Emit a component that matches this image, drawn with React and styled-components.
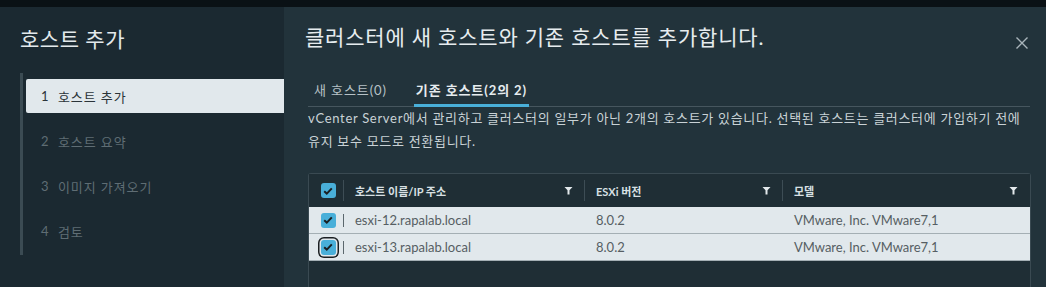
import React from "react";
import styled, { createGlobalStyle } from "styled-components";

const Global = createGlobalStyle`
  html, body { margin: 0; padding: 0; background: #0a1115; }
  body { font-family: Lato, "Noto Sans CJK KR", sans-serif; overflow: hidden; }
  * { box-sizing: border-box; }
`;

const Page = styled.div`
  width: 1046px;
  height: 287px;
  display: flex;
  flex-direction: column;
`;

const TopStrip = styled.div`
  height: 7px;
  background: #0a1115;
  flex: none;
`;

const Modal = styled.div`
  flex: 1;
  display: flex;
  min-height: 0;
`;

const Sidebar = styled.aside`
  width: 284px;
  flex: none;
  background: #1b2931;
  padding: 18px 0 0 0;
  display: flex;
  flex-direction: column;
`;

const SideTitle = styled.h2`
  margin: 0 0 20px 20px;
  font-size: 21px;
  line-height: 28px;
  font-weight: 400;
  letter-spacing: 0.5px;
  color: #e3e9ec;
`;

const StepList = styled.ol`
  list-style: none;
  margin: 0 0 0 20px;
  padding: 6px 0 7px 6px;
  border-left: 3px solid #3b4b53;
  display: flex;
  flex-direction: column;
  gap: 11px;
`;

const Step = styled.li`
  height: 34px;
  display: flex;
  align-items: center;
  padding-left: 15px;
  margin-left: -3px;
  font-size: 13px;
  letter-spacing: 0.9px;
  color: ${(p) => (p.$active ? "#2b3439" : "#5f6d74")};
  background: ${(p) => (p.$active ? "#e1e8ec" : "transparent")};
  border-radius: 2px 0 0 2px;
`;

const StepNum = styled.span`
  width: 17px;
  flex: none;
`;

const Main = styled.section`
  flex: 1;
  background: #22333b;
  padding: 16px 16px 0 24px;
  display: flex;
  flex-direction: column;
  min-width: 0;
`;

const Header = styled.div`
  display: flex;
  align-items: center;
  justify-content: space-between;
`;

const Title = styled.h1`
  margin: 0 0 0 -3px;
  font-size: 21px;
  line-height: 28px;
  font-weight: 400;
  color: #e6ecef;
  letter-spacing: 0.8px;
`;

const Close = styled.button`
  border: 0;
  background: none;
  padding: 0;
  width: 16px;
  height: 16px;
  margin: 12px 0 0 0;
  display: flex;
  align-items: center;
  justify-content: center;
  color: #a9b5ba;
`;

const Tabs = styled.div`
  display: flex;
  gap: 25px;
  margin-top: 20px;
  border-bottom: 1px solid #46565e;
  padding-left: 4px;
`;

const Tab = styled.div`
  height: 36px;
  display: flex;
  align-items: center;
  padding: 3px 2px 0 2px;
  font-size: 13px;
  letter-spacing: 0.9px;
  font-weight: ${(p) => (p.$active ? 700 : 400)};
  color: ${(p) => (p.$active ? "#e6ecef" : "#b7c2c7")};
  border-bottom: 3px solid ${(p) => (p.$active ? "#49afd9" : "transparent")};
  margin-bottom: -1px;
`;

const Desc = styled.p`
  margin: 0;
  font-size: 13px;
  line-height: 23px;
  letter-spacing: 0.7px;
  color: #c9d2d6;
  width: 722px;
`;

const Table = styled.div`
  margin-top: 20px;
  width: 723px;
  flex: 1;
  border: 1px solid #3a4a52;
  border-bottom: 0;
  border-radius: 3px 3px 0 0;
  background: #1f2e35;
  display: flex;
  flex-direction: column;
`;

const Row = styled.div`
  display: grid;
  grid-template-columns: 35px 241px 198px 1fr;
  align-items: center;
  height: ${(p) => (p.$head ? "33px" : "27px")};
  background: ${(p) => (p.$head ? "#1f2e35" : "#e1e8ec")};
  border-bottom: ${(p) => (p.$head ? "none" : "1px solid #a4afb4")};
`;

const CheckCell = styled.div`
  height: 100%;
  display: flex;
  align-items: center;
  justify-content: center;
  position: relative;
  padding-left: 3px;
  &::after {
    content: "";
    position: absolute;
    right: 0;
    top: ${(p) => (p.$head ? "6px" : "7px")};
    bottom: 6px;
    width: 1px;
    background: ${(p) => (p.$head ? "#3d4d55" : "#5b676d")};
  }
`;

const Box = styled.span`
  width: 15px;
  height: 15px;
  border-radius: 3px;
  background: #49afd9;
  display: flex;
  align-items: center;
  justify-content: center;
  box-shadow: ${(p) => (p.$focus ? "0 0 0 1.5px #e1e8ec, 0 0 0 3px #1b1f22" : "none")};
`;

const HeadCell = styled.div`
  height: 100%;
  display: flex;
  align-items: center;
  justify-content: space-between;
  padding: 0 12px 0 11px;
  font-size: 11px;
  font-weight: 700;
  color: #d8e0e4;
  position: relative;
  &::after {
    content: "";
    display: ${(p) => (p.$last ? "none" : "block")};
    position: absolute;
    right: 0;
    top: 6px;
    bottom: 6px;
    width: 1px;
    background: #3d4d55;
  }
`;

const Cell = styled.div`
  padding-left: 11px;
  font-size: 13px;
  color: #565e63;
`;

const Check = () => (
  <svg width="10" height="8" viewBox="0 0 10 8">
    <path d="M1.2 4.2 L3.8 6.6 L8.8 1.4" fill="none" stroke="#1a1f22" strokeWidth="2" />
  </svg>
);

const Filter = () => (
  <svg width="9" height="9" viewBox="0 0 9 9">
    <path d="M0.5 1 H8.5 L5.5 4.2 V8.5 H3.5 V4.2 Z" fill="#e3e9ec" />
  </svg>
);

const hosts = [
  { name: "esxi-12.rapalab.local", ver: "8.0.2", model: "VMware, Inc. VMware7,1" },
  { name: "esxi-13.rapalab.local", ver: "8.0.2", model: "VMware, Inc. VMware7,1", focus: true },
];

export default function App() {
  return (
    <Page>
      <Global />
      <TopStrip />
      <Modal>
        <Sidebar>
          <SideTitle>호스트 추가</SideTitle>
          <StepList>
            <Step $active><StepNum>1</StepNum>호스트 추가</Step>
            <Step><StepNum>2</StepNum>호스트 요약</Step>
            <Step><StepNum>3</StepNum>이미지 가져오기</Step>
            <Step><StepNum>4</StepNum>검토</Step>
          </StepList>
        </Sidebar>
        <Main>
          <Header>
            <Title>클러스터에 새 호스트와 기존 호스트를 추가합니다.</Title>
            <Close aria-label="닫기">
              <svg width="14" height="14" viewBox="0 0 14 14">
                <path d="M1.5 1.5 L12.5 12.5 M12.5 1.5 L1.5 12.5" stroke="#a9b5ba" strokeWidth="1.4" />
              </svg>
            </Close>
          </Header>
          <Tabs>
            <Tab>새 호스트(0)</Tab>
            <Tab $active>기존 호스트(2의 2)</Tab>
          </Tabs>
          <Desc>
            vCenter Server에서 관리하고 클러스터의 일부가 아닌 2개의 호스트가 있습니다. 선택된 호스트는 클러스터에 가입하기 전에 유지 보수 모드로 전환됩니다.
          </Desc>
          <Table>
            <Row $head>
              <CheckCell $head><Box><Check /></Box></CheckCell>
              <HeadCell>호스트 이름/IP 주소<Filter /></HeadCell>
              <HeadCell>ESXi 버전<Filter /></HeadCell>
              <HeadCell $last>모델<Filter /></HeadCell>
            </Row>
            {hosts.map((h) => (
              <Row key={h.name}>
                <CheckCell><Box $focus={h.focus}><Check /></Box></CheckCell>
                <Cell>{h.name}</Cell>
                <Cell>{h.ver}</Cell>
                <Cell>{h.model}</Cell>
              </Row>
            ))}
          </Table>
        </Main>
      </Modal>
    </Page>
  );
}
